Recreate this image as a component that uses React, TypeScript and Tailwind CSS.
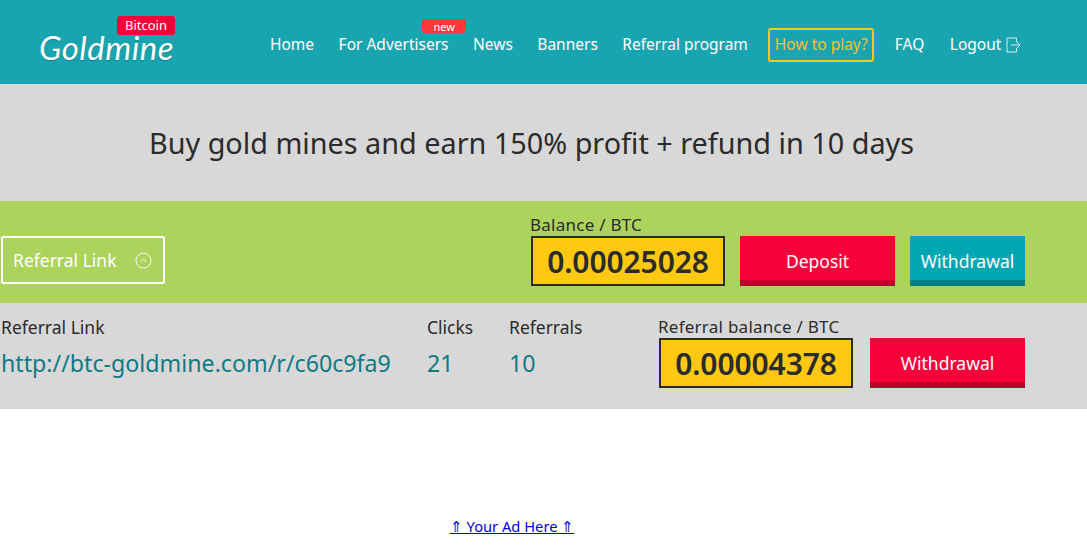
const nav = ["Home", "For Advertisers", "News", "Banners", "Referral program"];

function BalanceBox({ label, value }: { label: string; value: string }) {
  return (
    <div className="w-[195px]">
      <div className="h-[19px] -ml-px whitespace-nowrap text-[17px] leading-[17px] tracking-[0.25px] text-[#2b2b2b]">{label}</div>
      <div className="mt-[1px] flex h-[50px] w-[194px] items-center justify-center border-2 border-[#2b2b2b] bg-[#ffc912] text-[30px] font-semibold tracking-[-0.1px] text-[#2b2b2b]">
        {value}
      </div>
    </div>
  );
}

function ActionButton({ text, className }: { text: string; className: string }) {
  return (
    <button className={"flex h-[50px] items-center justify-center border-b-[6px] pt-[6px] text-[17.5px] text-white " + className}>
      {text}
    </button>
  );
}

export default function App() {
  return (
    <div className="min-h-[547px] overflow-hidden bg-white font-['Noto_Sans',sans-serif]">
      <header className="flex h-[84px] bg-[#19a5b0]">
        <div className="relative ml-[39px] w-[231px] shrink-0">
          <span className="absolute left-0 top-[34px] font-['Lato',sans-serif] text-[33px] leading-[26px] tracking-[0.5px] text-white italic [text-shadow:0_1px_1px_rgba(0,0,0,0.25)]">
            Goldmine
          </span>
          <span className="absolute left-[78px] top-[16px] flex h-[19px] w-[58px] items-center justify-center rounded-[3px] bg-[#f8003a] text-[13px] text-white">
            Bitcoin
          </span>
        </div>
        <nav className="flex items-center gap-[24.5px] pt-[6px] text-[15.5px] text-white">
          {nav.map((item) => (
            <a key={item} className="relative whitespace-nowrap">
              {item}
              {item === "For Advertisers" && (
                <span className="absolute left-[83.5px] top-[-14px] flex h-[14px] w-[44px] items-center justify-center rounded-[3px] bg-[#ff383e] text-[11px] leading-none text-white">
                  new
                </span>
              )}
            </a>
          ))}
          <a className="-ml-[4px] flex h-[34px] w-[106px] items-center justify-center rounded-[3px] border-2 border-[#ffc912] text-[#f5c12e]">
            How to play?
          </a>
          <a className="-ml-[4px]">FAQ</a>
          <a className="ml-px flex items-center gap-[5px]">
            Logout
            <svg width="15" height="16" viewBox="0 0 15 16" fill="none" stroke="#d5f0f2" strokeWidth="1">
              <path d="M10.5 5V1H1v14h9.5v-4" />
              <path d="M5 8h9M11 5l3 3-3 3" />
            </svg>
          </a>
        </nav>
      </header>

      <section className="flex h-[117px] items-center justify-center bg-[#d8d8d8] pr-[24px] text-[28.8px] text-[#2b2b2b]">
        Buy gold mines and earn 150% profit + refund in 10 days
      </section>

      <section className="flex h-[102px] items-start bg-[#acd35c] pt-[35px] pl-px">
        <button className="flex h-[48px] w-[164px] items-center gap-[19px] rounded-[2px] border-2 border-white pt-px pl-[10px] text-[17.5px] text-white">
          Referral Link
          <svg width="17" height="17" viewBox="0 0 17 17" fill="none" stroke="white" strokeWidth="1">
            <circle cx="8.5" cy="8.5" r="7.5" />
            <path d="M5.5 10l3-3 3 3" />
          </svg>
        </button>
        <div className="-mt-[20px] ml-[366px]">
          <BalanceBox label="Balance / BTC" value="0.00025028" />
        </div>
        <ActionButton text="Deposit" className="ml-[14px] w-[155px] border-[#bb0029] bg-[#f8003a]" />
        <ActionButton text="Withdrawal" className="ml-[15px] w-[115px] border-[#007f88] bg-[#00a7b2]" />
      </section>

      <section className="flex h-[106px] bg-[#d8d8d8] text-[#2b2b2b]">
        <div className="w-[427px] pt-[14px] pl-px">
          <div className="text-[17.5px] leading-[20px]">Referral Link</div>
          <a className="mt-[11px] block text-[23.2px] leading-[30px] text-[#107a84]">http://btc-goldmine.com/r/c60c9fa9</a>
        </div>
        <div className="w-[82px] pt-[14px]">
          <div className="text-[17.5px] leading-[20px]">Clicks</div>
          <div className="mt-[11px] text-[23.2px] leading-[30px] text-[#107a84]">21</div>
        </div>
        <div className="w-[150px] pt-[14px]">
          <div className="text-[17.5px] leading-[20px]">Referrals</div>
          <div className="mt-[11px] text-[23.2px] leading-[30px] text-[#107a84]">10</div>
        </div>
        <div className="pt-[15px]">
          <BalanceBox label="Referral balance / BTC" value="0.00004378" />
        </div>
        <ActionButton text="Withdrawal" className="mt-[35px] ml-[16px] w-[155px] border-[#bb0029] bg-[#f8003a]" />
      </section>

      <div className="pt-[107px] pr-[63px] text-center text-[14.7px] leading-[20px]">
        <a className="text-[#0000ee] underline">⇑ Your Ad Here ⇑</a>
      </div>
    </div>
  );
}
